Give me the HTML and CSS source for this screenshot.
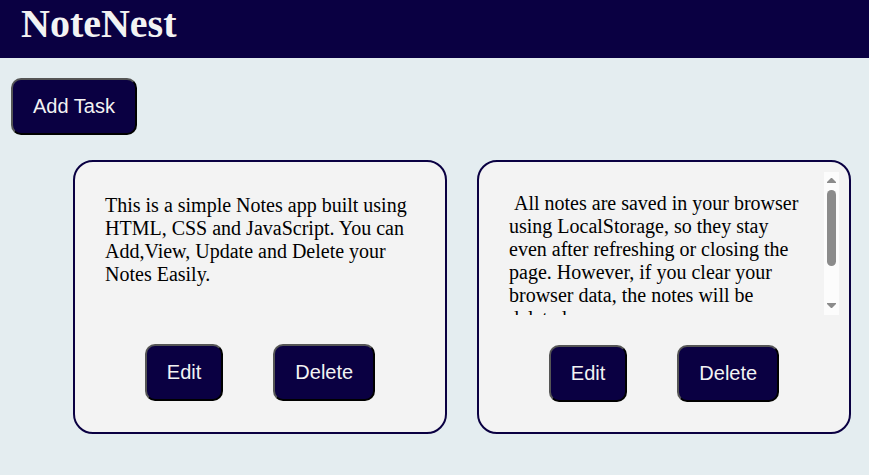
FILE: index.html
```html
<!DOCTYPE html>
<html lang="en">
<head>
  <meta charset="utf-8">
  <meta name="viewport" content="width=device-width, initial-scale=1">
  <title>NoteNest</title>
  <link rel="stylesheet" href="styles.css">
</head>
<body>
  <header class="site-header">
    <h1 class="brand">NoteNest</h1>
  </header>
  <main>
    <div class="toolbar">
      <button class="btn" type="button">Add Task</button>
    </div>
    <section class="notes">
      <article class="card">
        <div class="note">
          <p class="note-text">This is a simple Notes app built using HTML, CSS and JavaScript. You can Add,View, Update and Delete your Notes Easily.</p>
        </div>
        <div class="actions">
          <button class="btn" type="button">Edit</button>
          <button class="btn" type="button">Delete</button>
        </div>
      </article>
      <article class="card">
        <div class="note note-long">
          <p class="note-text">&nbsp;All notes are saved in your browser using LocalStorage, so they stay even after refreshing or closing the page. However, if you clear your browser data, the notes will be deleted.</p>
          <div class="scrollbar" aria-hidden="true">
            <svg class="arrow" viewBox="0 0 9 5"><path d="M4 0h1l4 4v1H0V4z"/></svg>
            <div class="track"><div class="thumb"></div></div>
            <svg class="arrow" viewBox="0 0 9 5"><path d="M0 0h9v1L5 5H4L0 1z"/></svg>
          </div>
        </div>
        <div class="actions">
          <button class="btn" type="button">Edit</button>
          <button class="btn" type="button">Delete</button>
        </div>
      </article>
    </section>
  </main>
</body>
</html>
```
FILE: styles.css
```css
* {
  box-sizing: border-box;
}

body {
  margin: 0;
  background: #e4edf0;
  color: #000;
  font-family: "Liberation Serif", "Times New Roman", serif;
  font-size: 20px;
  line-height: 23px;
}

.site-header {
  padding: 2px 21px 12px;
  background: #0a0042;
  color: #f3f3f3;
}

.brand {
  margin: 0;
  font-size: 40px;
  line-height: 44px;
}

.toolbar {
  padding: 20px 11px 25px;
  display: flex;
}

.btn {
  padding: 15px 20px;
  border: 2px solid;
  border-color: #555 #000 #000 #555;
  border-radius: 10px;
  background: #0a0042;
  color: #f3f3f3;
  font-family: "Liberation Sans", Arial, sans-serif;
  font-size: 20px;
  line-height: 23px;
  cursor: pointer;
}

.notes {
  display: flex;
  flex-wrap: wrap;
  justify-content: center;
  gap: 30px;
  padding-left: 55px;
}

.card {
  display: flex;
  flex-direction: column;
  justify-content: center;
  width: 374px;
  padding: 10px;
  border: 2px solid #0a0042;
  border-radius: 20px;
  background: #f3f3f3;
}

.note {
  display: flex;
  min-height: 140px;
}

.note-long {
  height: 143px;
  overflow: hidden;
}

.note-text {
  flex: 1;
  margin: 0;
  padding: 20px;
}

.scrollbar {
  display: flex;
  flex-direction: column;
  align-items: center;
  width: 15px;
  padding: 6px 0 7px;
  background: #fcfcfc;
}

.arrow {
  width: 9px;
  height: 5px;
  fill: #8b8b8b;
}

.track {
  flex: 1;
  padding: 7px 0;
}

.thumb {
  width: 9px;
  height: 76px;
  border-radius: 5px;
  background: #8b8b8b;
}

.actions {
  display: flex;
  justify-content: center;
  gap: 50px;
  padding: 30px 0 20px;
}
```
